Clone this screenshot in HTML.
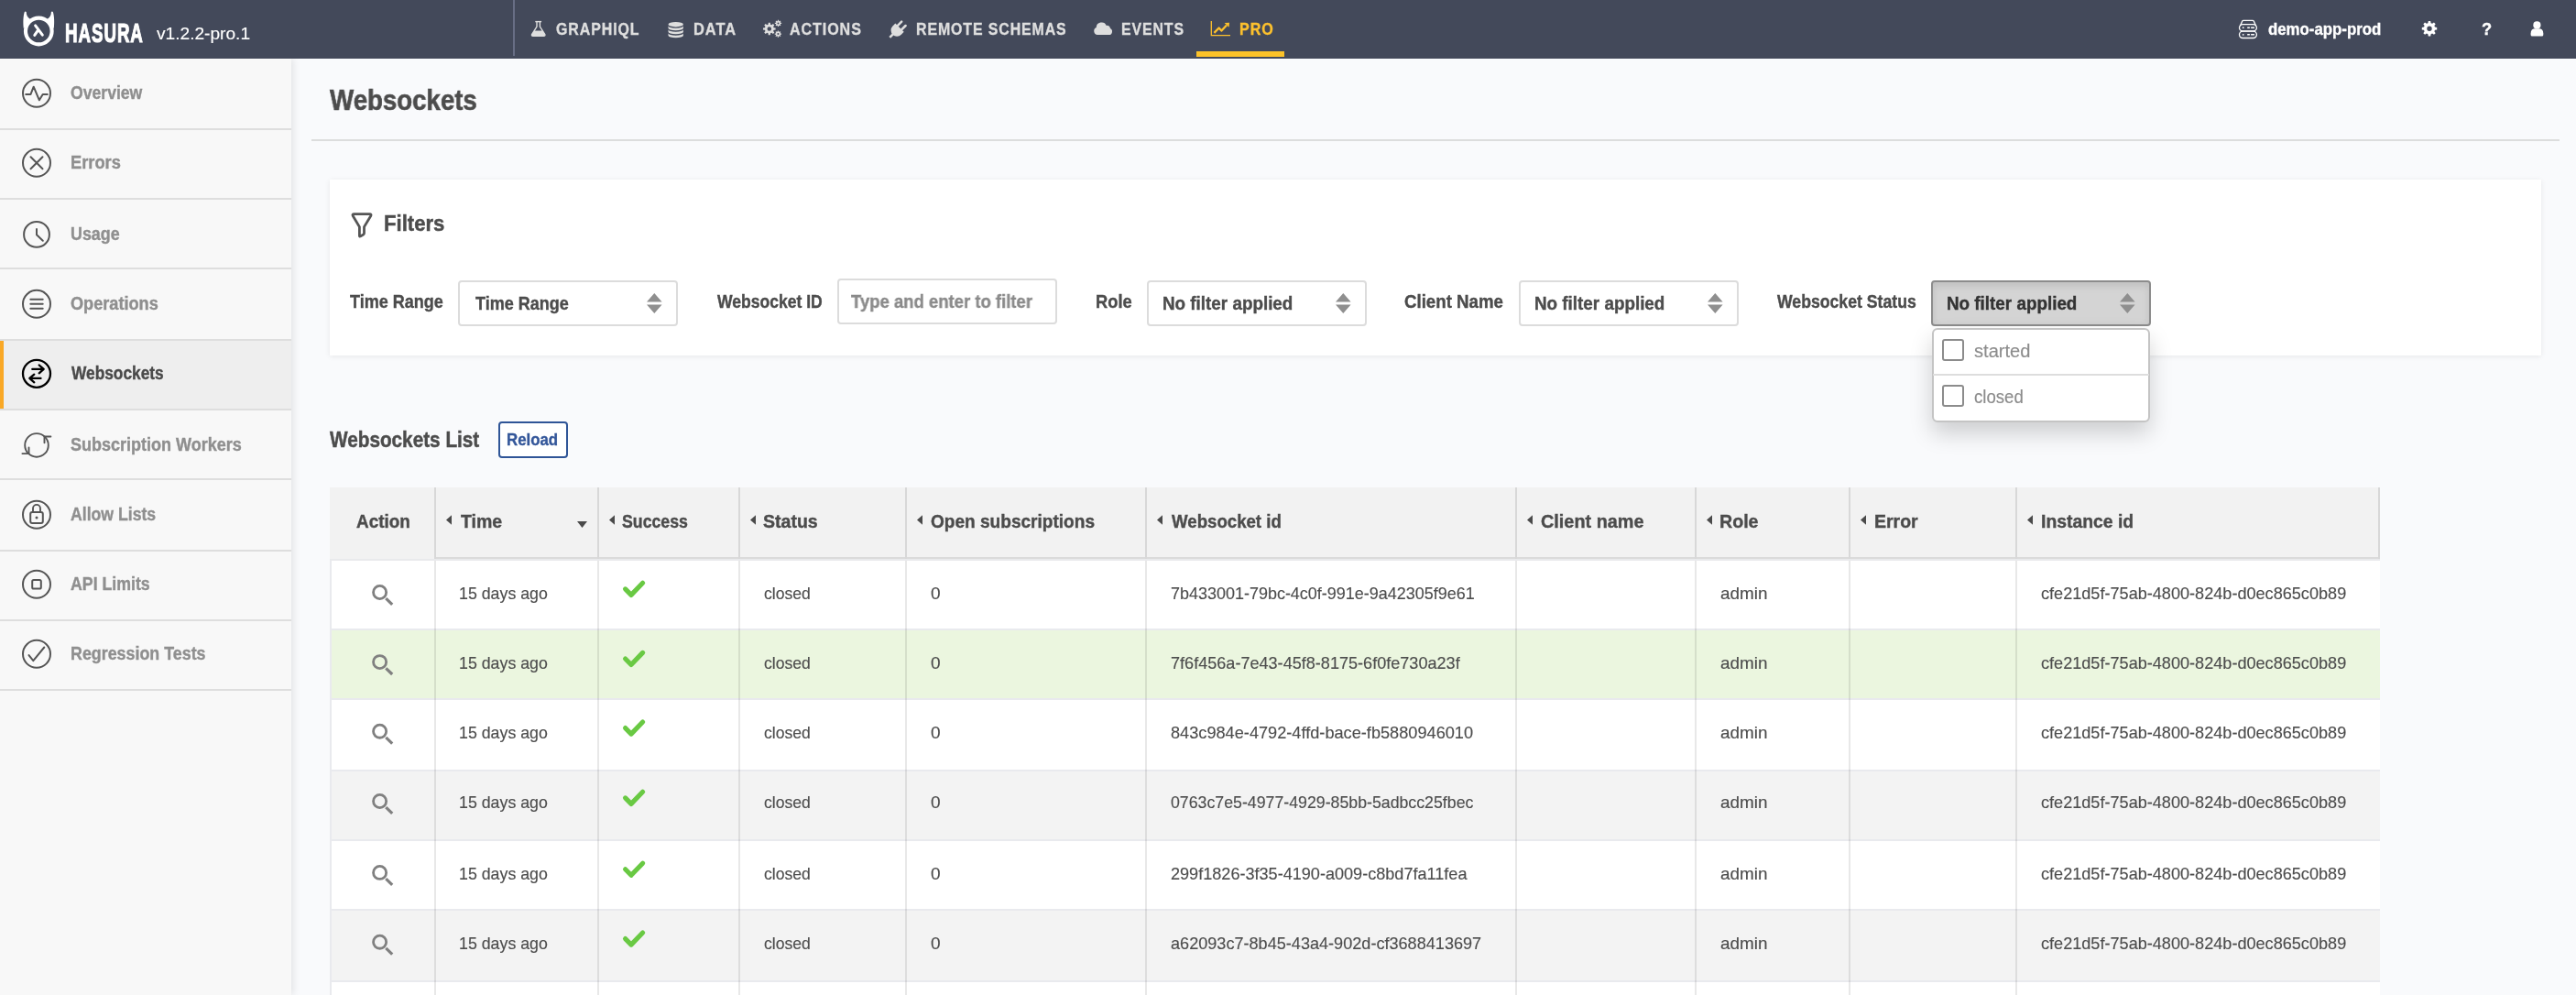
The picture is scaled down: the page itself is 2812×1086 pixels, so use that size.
<!DOCTYPE html>
<html lang="en"><head><meta charset="utf-8"><title>Websockets</title>
<style>
html,body{margin:0;padding:0}
body{width:2812px;height:1086px;overflow:hidden;position:relative;background:#f9fafc;font-family:"Liberation Sans", sans-serif}
.t{-webkit-text-stroke:.008em}
.t.b{-webkit-text-stroke:.02em}
.t.logo{-webkit-text-stroke:.04em}
.t{position:absolute;white-space:nowrap;line-height:1;transform-origin:0 0;display:block}
#root{position:absolute;left:0;top:0;width:2812px;height:1086px;will-change:transform}
#hdr{position:absolute;left:0;top:0;width:2812px;height:64px;background:#43495a}
#side{position:absolute;left:0;top:64px;width:318px;height:1022px;background:#f8f8f8;box-shadow:2px 0 8px rgba(0,0,0,.10)}
#card{position:absolute;left:360px;top:196px;width:2414px;height:192px;background:#fff;box-shadow:0 1px 6px rgba(0,0,0,.08)}
.sel,.inp{position:absolute;box-sizing:border-box;border:2px solid #dcdcdc;border-radius:4px;background:#fff}
.sel.act{background:#d4d4d4;border-color:#8c8c8c;box-shadow:inset 0 4px 8px rgba(0,0,0,.10)}
#dd{position:absolute;left:2109px;top:358px;width:238px;height:103px;box-sizing:border-box;background:#fff;border:2px solid #c4c4c4;border-radius:6px;box-shadow:0 12px 24px rgba(0,0,0,.175)}
</style></head>
<body>
<div id="root">
<div id="side"></div>
<header>
<div id="hdr"></div>
<div style="position:absolute;left:560px;top:0;width:2px;height:61px;background:#686e85"></div>
<svg style="position:absolute;left:0px;top:0px;overflow:visible" width="2812" height="64" viewBox="0 0 2812 64" ><circle cx="42.3" cy="34" r="14.35" fill="none" stroke="#fff" stroke-width="4.1"/><path d="M25.8 31C25.1 25 25.3 17 26.8 12.9Q27.7 12.1 28.7 13.1C28.8 16.6 29.9 19.3 32.9 20.7L29.5 27Z" fill="#fff"/><path d="M58.8 31C59.5 25 59.3 17 57.8 12.9Q56.9 12.1 55.9 13.1C55.8 16.6 54.7 19.3 51.7 20.7L55.1 27Z" fill="#fff"/><path d="M38.6 27.9L46.3 38.2M40.9 33.9L37.8 38.4" stroke="#fff" stroke-width="3" stroke-linecap="round" fill="none"/><rect x="584.3" y="22.9" width="6.8" height="1.4" fill="#dedede"/><path d="M586 24V29L580.6 37.6Q580 39.2 581.8 39.2H593.6Q595.4 39.2 594.8 37.6L589.4 29V24" fill="none" stroke="#dedede" stroke-width="1.4"/><path d="M583.1 33.6H592.3L594.8 37.6Q595.4 39.2 593.6 39.2H581.8Q580 39.2 580.6 37.6Z" fill="#dedede"/><ellipse cx="737.7" cy="26.7" rx="8.2" ry="2.7" fill="#dedede"/><path d="M729.5 28.3 A8.2 2.5 0 0 0 745.9 28.3 V30.8 A8.2 2.5 0 0 1 729.5 30.8 Z" fill="#dedede"/><path d="M729.5 32.3 A8.2 2.5 0 0 0 745.9 32.3 V34.8 A8.2 2.5 0 0 1 729.5 34.8 Z" fill="#dedede"/><path d="M729.5 36.3 A8.2 2.5 0 0 0 745.9 36.3 V38.8 A8.2 2.5 0 0 1 729.5 38.8 Z" fill="#dedede"/><path fill-rule="evenodd" fill="#dedede" d="M838.51 26.67L838.79 24.67L840.81 24.67L841.09 26.67L842.30 27.17L843.91 25.96L845.34 27.39L844.13 29.00L844.63 30.21L846.63 30.49L846.63 32.51L844.63 32.79L844.13 34.00L845.34 35.61L843.91 37.04L842.30 35.83L841.09 36.33L840.81 38.33L838.79 38.33L838.51 36.33L837.30 35.83L835.69 37.04L834.26 35.61L835.47 34.00L834.97 32.79L832.97 32.51L832.97 30.49L834.97 30.21L835.47 29.00L834.26 27.39L835.69 25.96L837.30 27.17ZM837.50 31.50a2.30 2.30 0 1 0 4.60 0a2.30 2.30 0 1 0 -4.60 0Z"/><path fill-rule="evenodd" fill="#dedede" d="M848.83 22.89L848.96 21.74L850.04 21.74L850.17 22.89L850.80 23.15L851.70 22.43L852.47 23.20L851.75 24.10L852.01 24.73L853.16 24.86L853.16 25.94L852.01 26.07L851.75 26.70L852.47 27.60L851.70 28.37L850.80 27.65L850.17 27.91L850.04 29.06L848.96 29.06L848.83 27.91L848.20 27.65L847.30 28.37L846.53 27.60L847.25 26.70L846.99 26.07L845.84 25.94L845.84 24.86L846.99 24.73L847.25 24.10L846.53 23.20L847.30 22.43L848.20 23.15ZM848.50 25.40a1.00 1.00 0 1 0 2.00 0a1.00 1.00 0 1 0 -2.00 0Z"/><path fill-rule="evenodd" fill="#dedede" d="M848.73 34.59L848.86 33.44L849.94 33.44L850.07 34.59L850.70 34.85L851.60 34.13L852.37 34.90L851.65 35.80L851.91 36.43L853.06 36.56L853.06 37.64L851.91 37.77L851.65 38.40L852.37 39.30L851.60 40.07L850.70 39.35L850.07 39.61L849.94 40.76L848.86 40.76L848.73 39.61L848.10 39.35L847.20 40.07L846.43 39.30L847.15 38.40L846.89 37.77L845.74 37.64L845.74 36.56L846.89 36.43L847.15 35.80L846.43 34.90L847.20 34.13L848.10 34.85ZM848.40 37.10a1.00 1.00 0 1 0 2.00 0a1.00 1.00 0 1 0 -2.00 0Z"/><g transform="translate(978.8 33.4) rotate(45)" fill="#dedede"><rect x="-4.4" y="-12" width="2.6" height="8.5" rx="1.3"/><rect x="1.8" y="-12" width="2.6" height="8.5" rx="1.3"/><path d="M-6.6 -4.6H6.6V-0.5A6.6 6.6 0 0 1 -6.6 -0.5Z"/><rect x="-1.3" y="5" width="2.6" height="5.6"/></g><path d="M1198 38.1A4.2 4.2 0 0 1 1196.7 30.1A5.8 5.8 0 0 1 1207.8 27.9A3.4 3.4 0 0 1 1212 31.1A3.7 3.7 0 0 1 1210.5 38.1Z" fill="#dedede"/><path d="M1322.3 22.9V38.6H1343" fill="none" stroke="#fdc12d" stroke-width="1.3"/><path d="M1325.4 35.9L1330.6 30.5L1333.4 33.6L1339 27.4" fill="none" stroke="#fdc12d" stroke-width="2.3" stroke-linejoin="round"/><path d="M1342 24.8L1336.6 25.1L1341.6 29.8Z" fill="#fdc12d"/><g fill="none" stroke="#fff" stroke-width="1.3"><rect x="2444.5" y="26.6" width="18.9" height="7.3" rx="3.65"/><rect x="2444.5" y="34.1" width="18.9" height="7.4" rx="3.7"/><path d="M2445.3 28.6L2447.6 23.3Q2448 22.4 2449 22.4H2458.9Q2459.9 22.4 2460.4 23.3L2462.7 28.6"/><path d="M2453.2 30.2H2455.9M2457.1 30.2H2460.9M2453.2 37.8H2455.9M2457.1 37.8H2460.9" stroke-width="1.5"/></g><circle cx="2448.7" cy="30.2" r="0.9" fill="#fff"/><circle cx="2448.7" cy="37.8" r="0.9" fill="#fff"/><path fill-rule="evenodd" fill="#fff" d="M2650.40 25.21L2650.78 22.99L2653.22 22.99L2653.60 25.21L2655.10 25.83L2656.94 24.53L2658.67 26.26L2657.37 28.10L2657.99 29.60L2660.21 29.98L2660.21 32.42L2657.99 32.80L2657.37 34.30L2658.67 36.14L2656.94 37.87L2655.10 36.57L2653.60 37.19L2653.22 39.41L2650.78 39.41L2650.40 37.19L2648.90 36.57L2647.06 37.87L2645.33 36.14L2646.63 34.30L2646.01 32.80L2643.79 32.42L2643.79 29.98L2646.01 29.60L2646.63 28.10L2645.33 26.26L2647.06 24.53L2648.90 25.83ZM2649.30 31.20a2.70 2.70 0 1 0 5.40 0a2.70 2.70 0 1 0 -5.40 0Z"/><circle cx="2769.4" cy="27.4" r="4.1" fill="#fff"/><path d="M2762.6 38V36.5Q2762.6 31.2 2767.5 31.2H2771.4Q2776.3 31.2 2776.3 36.5V38Q2776.3 39.5 2774.8 39.5H2764.1Q2762.6 39.5 2762.6 38Z" fill="#fff"/></svg>
<span class="t b logo" id="t0" style="left:71.37px;top:21.00px;font-size:29.30px;font-weight:700;color:#fff;letter-spacing:1.50px;transform:scaleX(0.6391);">HASURA</span>
<span class="t" id="t1" style="left:170.68px;top:27.00px;font-size:19.00px;font-weight:400;color:#fff;transform:scaleX(1.0064);">v1.2.2-pro.1</span>
<span class="t b" id="t2" style="left:607.19px;top:24.00px;font-size:17.50px;font-weight:700;color:#dedede;letter-spacing:1.00px;transform:scaleX(0.9112);">GRAPHIQL</span>
<span class="t b" id="t3" style="left:756.94px;top:24.00px;font-size:17.50px;font-weight:700;color:#dedede;letter-spacing:1.00px;transform:scaleX(0.9388);">DATA</span>
<span class="t b" id="t4" style="left:862.43px;top:24.00px;font-size:17.50px;font-weight:700;color:#dedede;letter-spacing:1.00px;transform:scaleX(0.9189);">ACTIONS</span>
<span class="t b" id="t5" style="left:999.95px;top:24.00px;font-size:17.50px;font-weight:700;color:#dedede;letter-spacing:1.00px;transform:scaleX(0.9082);">REMOTE SCHEMAS</span>
<span class="t b" id="t6" style="left:1224.46px;top:24.00px;font-size:17.50px;font-weight:700;color:#dedede;letter-spacing:1.00px;transform:scaleX(0.9064);">EVENTS</span>
<span class="t b" id="t7" style="left:1352.96px;top:24.00px;font-size:17.50px;font-weight:700;color:#fdc12d;letter-spacing:1.00px;transform:scaleX(0.9202);">PRO</span>
<div style="position:absolute;left:1306px;top:56px;width:96px;height:6px;background:#fcc229"></div>
<span class="t b" id="t8" style="left:2476.18px;top:22.00px;font-size:19.00px;font-weight:700;color:#fff;transform:scaleX(0.8844);">demo-app-prod</span>
<span class="t b" id="t9" style="left:2708.79px;top:23.00px;font-size:18.00px;font-weight:700;color:#fff;transform:scaleX(1.0155);">?</span>
</header>
<aside>
<div style="position:absolute;left:0;top:140px;width:318px;height:2px;background:#dedede"></div>
<span class="t b" id="t10" style="left:77.08px;top:92.00px;font-size:19.50px;font-weight:700;color:#8f8f8f;transform:scaleX(0.9030);">Overview</span>
<div style="position:absolute;left:0;top:216px;width:318px;height:2px;background:#dedede"></div>
<span class="t b" id="t11" style="left:76.82px;top:168.00px;font-size:19.50px;font-weight:700;color:#8f8f8f;transform:scaleX(0.9361);">Errors</span>
<div style="position:absolute;left:0;top:292px;width:318px;height:2px;background:#dedede"></div>
<span class="t b" id="t12" style="left:76.94px;top:246.00px;font-size:19.50px;font-weight:700;color:#8f8f8f;transform:scaleX(0.9173);">Usage</span>
<div style="position:absolute;left:0;top:370px;width:318px;height:2px;background:#dedede"></div>
<span class="t b" id="t13" style="left:77.06px;top:322.00px;font-size:19.50px;font-weight:700;color:#8f8f8f;transform:scaleX(0.9305);">Operations</span>
<div style="position:absolute;left:0;top:372px;width:318px;height:74px;background:#eee;border-left:4px solid #f9a826;box-sizing:border-box"></div>
<div style="position:absolute;left:0;top:446px;width:318px;height:2px;background:#dedede"></div>
<span class="t b" id="t14" style="left:77.88px;top:398.00px;font-size:19.50px;font-weight:700;color:#4a4a4a;transform:scaleX(0.8874);">Websockets</span>
<div style="position:absolute;left:0;top:522px;width:318px;height:2px;background:#dedede"></div>
<span class="t b" id="t15" style="left:77.32px;top:476.00px;font-size:19.50px;font-weight:700;color:#8f8f8f;transform:scaleX(0.9239);">Subscription Workers</span>
<div style="position:absolute;left:0;top:600px;width:318px;height:2px;background:#dedede"></div>
<span class="t b" id="t16" style="left:77.39px;top:552.00px;font-size:19.50px;font-weight:700;color:#8f8f8f;transform:scaleX(0.9049);">Allow Lists</span>
<div style="position:absolute;left:0;top:676px;width:318px;height:2px;background:#dedede"></div>
<span class="t b" id="t17" style="left:77.37px;top:628.00px;font-size:19.50px;font-weight:700;color:#8f8f8f;transform:scaleX(0.9094);">API Limits</span>
<div style="position:absolute;left:0;top:752px;width:318px;height:2px;background:#dedede"></div>
<span class="t b" id="t18" style="left:76.83px;top:704.00px;font-size:19.50px;font-weight:700;color:#8f8f8f;transform:scaleX(0.9155);">Regression Tests</span>
<svg style="position:absolute;left:0px;top:64px;overflow:visible" width="318" height="720" viewBox="0 64 318 720" ><circle cx="40" cy="101.8" r="15" fill="none" stroke="#555" stroke-width="2"/><path d="M28.20 102.90L33.50 102.90L36.70 94.70L42.90 109.30L46.70 102.90L51.80 102.90" fill="none" stroke="#555" stroke-width="2" stroke-linecap="round" stroke-linejoin="round" /><circle cx="40" cy="177.8" r="15" fill="none" stroke="#555" stroke-width="2"/><path d="M33.50 171.30L46.50 184.30M46.50 171.30L33.50 184.30" fill="none" stroke="#555" stroke-width="2" stroke-linecap="round" stroke-linejoin="round" /><circle cx="40" cy="255.9" r="13.9" fill="none" stroke="#555" stroke-width="2"/><path d="M40.00 250.10L40.00 256.30L46.80 262.70" fill="none" stroke="#555" stroke-width="2" stroke-linecap="round" stroke-linejoin="round" /><circle cx="40" cy="331.8" r="15" fill="none" stroke="#555" stroke-width="2"/><path d="M33.30 326.80L46.70 326.80M33.30 331.80L46.70 331.80M33.30 336.80L46.70 336.80" fill="none" stroke="#555" stroke-width="2" stroke-linecap="round" stroke-linejoin="round" /><circle cx="40" cy="407.8" r="15" fill="none" stroke="#000" stroke-width="2.3"/><path d="M35.30 402.90L47.70 402.90M42.70 398.50L47.70 402.90L42.70 407.30M44.50 412.90L32.30 412.90M37.30 408.70L32.30 412.90L37.30 417.30" fill="none" stroke="#000" stroke-width="2.3" stroke-linecap="round" stroke-linejoin="round" /><circle cx="40" cy="485.9" r="12.8" fill="none" stroke="#555" stroke-width="1.9"/><path d="M55.40 476.50L48.50 476.50L48.50 483.30M24.40 495.10L31.50 495.10L31.50 488.50" fill="none" stroke="#555" stroke-width="1.9" stroke-linecap="round" stroke-linejoin="round" /><circle cx="40" cy="561.8" r="15" fill="none" stroke="#555" stroke-width="2"/><rect x="33.2" y="559" width="13.6" height="12.1" rx="2" fill="none" stroke="#555" stroke-width="2"/><path d="M36 559 V554.9 A4 4 0 0 1 44 554.9 V559" fill="none" stroke="#555" stroke-width="1.9" stroke-linecap="round" stroke-linejoin="round" /><circle cx="40" cy="564.9" r="1.5" fill="#555"/><circle cx="40" cy="637.8" r="15" fill="none" stroke="#555" stroke-width="2"/><rect x="35.2" y="633" width="9.6" height="9.6" rx="1.6" fill="none" stroke="#555" stroke-width="2"/><circle cx="40" cy="713.8" r="15" fill="none" stroke="#555" stroke-width="2"/><path d="M31.50 715.10L36.30 721.10L48.30 706.50" fill="none" stroke="#555" stroke-width="2" stroke-linecap="round" stroke-linejoin="round" /></svg>
</aside>
<main>
<span class="t b" id="t19" style="left:359.79px;top:93.00px;font-size:32.00px;font-weight:700;color:#4c4c4c;transform:scaleX(0.8637);">Websockets</span>
<div style="position:absolute;left:340px;top:152px;width:2454px;height:2px;background:#dcdddd"></div>
<div id="card"></div>
<span class="t b" id="t20" style="left:419.39px;top:233.00px;font-size:23.20px;font-weight:700;color:#4c4c4c;transform:scaleX(0.9531);">Filters</span>
<svg style="position:absolute;left:380px;top:230px;overflow:visible" width="30" height="32" viewBox="380 230 30 32" ><path d="M386.6 233.6H403.4Q405.9 233.6 404.7 235.7L397.5 247.6V254.4Q397.5 255.4 396.6 256L393.6 257.9Q392.4 258.6 392.4 257.2V247.6L385.3 235.7Q384.1 233.6 386.6 233.6Z" fill="none" stroke="#555" stroke-width="2.8" stroke-linejoin="round"/></svg>
<span class="t b" id="t21" style="left:382.31px;top:320.00px;font-size:19.50px;font-weight:700;color:#4c4c4c;transform:scaleX(0.9244);">Time Range</span>
<span class="t b" id="t22" style="left:782.88px;top:320.00px;font-size:19.50px;font-weight:700;color:#4c4c4c;transform:scaleX(0.9003);">Websocket ID</span>
<span class="t b" id="t23" style="left:1195.83px;top:320.00px;font-size:19.50px;font-weight:700;color:#4c4c4c;transform:scaleX(0.9382);">Role</span>
<span class="t b" id="t24" style="left:1533.25px;top:320.00px;font-size:19.50px;font-weight:700;color:#4c4c4c;transform:scaleX(0.9574);">Client Name</span>
<span class="t b" id="t25" style="left:1939.88px;top:320.00px;font-size:19.50px;font-weight:700;color:#4c4c4c;transform:scaleX(0.9053);">Websocket Status</span>
<div class="sel" style="left:500px;top:306px;width:240px;height:50px;"></div>
<svg style="position:absolute;left:706px;top:320px" width="16.6" height="22" viewBox="0 0 16.6 22"><path d="M8.3 0L16.6 9.6H0zM0 12.4H16.6L8.3 22z" fill="#8f8f8f"/></svg>
<div class="sel" style="left:1252px;top:306px;width:240px;height:50px;"></div>
<svg style="position:absolute;left:1458px;top:320px" width="16.6" height="22" viewBox="0 0 16.6 22"><path d="M8.3 0L16.6 9.6H0zM0 12.4H16.6L8.3 22z" fill="#8f8f8f"/></svg>
<div class="sel" style="left:1658px;top:306px;width:240px;height:50px;"></div>
<svg style="position:absolute;left:1864px;top:320px" width="16.6" height="22" viewBox="0 0 16.6 22"><path d="M8.3 0L16.6 9.6H0zM0 12.4H16.6L8.3 22z" fill="#8f8f8f"/></svg>
<div class="sel act" style="left:2108px;top:306px;width:240px;height:50px;"></div>
<svg style="position:absolute;left:2314px;top:320px" width="16.6" height="22" viewBox="0 0 16.6 22"><path d="M8.3 0L16.6 9.6H0zM0 12.4H16.6L8.3 22z" fill="#8f8f8f"/></svg>
<span class="t b" id="t26" style="left:519.06px;top:322.00px;font-size:19.50px;font-weight:700;color:#4c4c4c;transform:scaleX(0.9244);">Time Range</span>
<span class="t b" id="t27" style="left:1268.78px;top:322.00px;font-size:19.50px;font-weight:700;color:#4c4c4c;transform:scaleX(0.9661);">No filter applied</span>
<span class="t b" id="t28" style="left:1675.03px;top:322.00px;font-size:19.50px;font-weight:700;color:#4c4c4c;transform:scaleX(0.9661);">No filter applied</span>
<span class="t b" id="t29" style="left:2124.77px;top:322.00px;font-size:19.50px;font-weight:700;color:#333;transform:scaleX(0.9662);">No filter applied</span>
<div class="inp" style="left:914px;top:304px;width:240px;height:50px"></div>
<span class="t b" id="t30" style="left:928.81px;top:320.00px;font-size:19.50px;font-weight:700;color:#8a8a8a;transform:scaleX(0.9483);">Type and enter to filter</span>
<span class="t b" id="t31" style="left:360.09px;top:469.00px;font-size:23.60px;font-weight:700;color:#4c4c4c;transform:scaleX(0.8788);">Websockets List</span>
<div style="position:absolute;left:544px;top:460px;width:76px;height:40px;box-sizing:border-box;border:2px solid #2f5597;border-radius:4px;background:#fff"></div>
<span class="t b" id="t32" style="left:553.40px;top:471.00px;font-size:18.00px;font-weight:700;color:#34579a;transform:scaleX(0.9355);">Reload</span>
<div style="position:absolute;left:360px;top:532px;width:2238px;height:78px;background:#f2f2f2"></div>
<div style="position:absolute;left:474px;top:608px;width:2124px;height:2px;background:#dbdbdb"></div>
<div style="position:absolute;left:360px;top:610px;width:2238px;height:2px;background:#e9eaec"></div>
<div style="position:absolute;left:2596px;top:532px;width:2px;height:78px;background:#d8d8d8"></div>
<span class="t b" id="t33" style="left:388.84px;top:558.00px;font-size:21.00px;font-weight:700;color:#4c4c4c;transform:scaleX(0.8988);">Action</span>
<span class="t b" id="t34" style="left:502.81px;top:558.00px;font-size:21.00px;font-weight:700;color:#4c4c4c;transform:scaleX(0.9283);">Time</span>
<span class="t b" id="t35" style="left:679.29px;top:558.00px;font-size:21.00px;font-weight:700;color:#4c4c4c;transform:scaleX(0.8438);">Success</span>
<span class="t b" id="t36" style="left:833.24px;top:558.00px;font-size:21.00px;font-weight:700;color:#4c4c4c;transform:scaleX(0.9300);">Status</span>
<span class="t b" id="t37" style="left:1015.95px;top:558.00px;font-size:21.00px;font-weight:700;color:#4c4c4c;transform:scaleX(0.9078);">Open subscriptions</span>
<span class="t b" id="t38" style="left:1279.12px;top:558.00px;font-size:21.00px;font-weight:700;color:#4c4c4c;transform:scaleX(0.8877);">Websocket id</span>
<span class="t b" id="t39" style="left:1682.37px;top:558.00px;font-size:21.00px;font-weight:700;color:#4c4c4c;transform:scaleX(0.9448);">Client name</span>
<span class="t b" id="t40" style="left:1876.73px;top:558.00px;font-size:21.00px;font-weight:700;color:#4c4c4c;transform:scaleX(0.9343);">Role</span>
<span class="t b" id="t41" style="left:2046.23px;top:558.00px;font-size:21.00px;font-weight:700;color:#4c4c4c;transform:scaleX(0.9273);">Error</span>
<span class="t b" id="t42" style="left:2227.99px;top:558.00px;font-size:21.00px;font-weight:700;color:#4c4c4c;transform:scaleX(0.9215);">Instance id</span>
<svg style="position:absolute;left:487px;top:562px" width="6.2" height="11" viewBox="0 0 6.2 11"><path d="M6.2 0V11L0 5.5z" fill="#4a4a4a"/></svg>
<svg style="position:absolute;left:665px;top:562px" width="6.2" height="11" viewBox="0 0 6.2 11"><path d="M6.2 0V11L0 5.5z" fill="#4a4a4a"/></svg>
<svg style="position:absolute;left:819px;top:562px" width="6.2" height="11" viewBox="0 0 6.2 11"><path d="M6.2 0V11L0 5.5z" fill="#4a4a4a"/></svg>
<svg style="position:absolute;left:1001px;top:562px" width="6.2" height="11" viewBox="0 0 6.2 11"><path d="M6.2 0V11L0 5.5z" fill="#4a4a4a"/></svg>
<svg style="position:absolute;left:1263px;top:562px" width="6.2" height="11" viewBox="0 0 6.2 11"><path d="M6.2 0V11L0 5.5z" fill="#4a4a4a"/></svg>
<svg style="position:absolute;left:1667px;top:562px" width="6.2" height="11" viewBox="0 0 6.2 11"><path d="M6.2 0V11L0 5.5z" fill="#4a4a4a"/></svg>
<svg style="position:absolute;left:1863px;top:562px" width="6.2" height="11" viewBox="0 0 6.2 11"><path d="M6.2 0V11L0 5.5z" fill="#4a4a4a"/></svg>
<svg style="position:absolute;left:2031px;top:562px" width="6.2" height="11" viewBox="0 0 6.2 11"><path d="M6.2 0V11L0 5.5z" fill="#4a4a4a"/></svg>
<svg style="position:absolute;left:2213px;top:562px" width="6.2" height="11" viewBox="0 0 6.2 11"><path d="M6.2 0V11L0 5.5z" fill="#4a4a4a"/></svg>
<svg style="position:absolute;left:630px;top:569px" width="11" height="7" viewBox="0 0 11 7"><path d="M0 0H11L5.5 7z" fill="#4a4a4a"/></svg>
<div style="position:absolute;left:360px;top:612px;width:2238px;height:76px;background:#fff;border-bottom:2px solid #e9eaee;border-left:2px solid #e9eaee;box-sizing:border-box"></div>
<span class="t" id="t43" style="left:500.94px;top:638.00px;font-size:19.00px;font-weight:400;color:#4d4d4d;transform:scaleX(0.9357);">15 days ago</span>
<span class="t" id="t44" style="left:833.66px;top:638.00px;font-size:19.00px;font-weight:400;color:#4d4d4d;transform:scaleX(0.9267);">closed</span>
<span class="t" id="t45" style="left:1016.04px;top:638.00px;font-size:19.00px;font-weight:400;color:#4d4d4d;transform:scaleX(1.0050);">0</span>
<span class="t" id="t46" style="left:1277.71px;top:638.00px;font-size:19.00px;font-weight:400;color:#4d4d4d;transform:scaleX(0.9456);">7b433001-79bc-4c0f-991e-9a42305f9e61</span>
<span class="t" id="t47" style="left:1877.59px;top:638.00px;font-size:19.00px;font-weight:400;color:#4d4d4d;transform:scaleX(0.9945);">admin</span>
<span class="t" id="t48" style="left:2227.86px;top:638.00px;font-size:19.00px;font-weight:400;color:#4d4d4d;transform:scaleX(0.9529);">cfe21d5f-75ab-4800-824b-d0ec865c0b89</span>
<div style="position:absolute;left:360px;top:688px;width:2238px;height:76px;background:#ebf6df;border-bottom:2px solid #e9eaee;border-left:2px solid #e9eaee;box-sizing:border-box"></div>
<span class="t" id="t49" style="left:500.94px;top:714.00px;font-size:19.00px;font-weight:400;color:#4d4d4d;transform:scaleX(0.9357);">15 days ago</span>
<span class="t" id="t50" style="left:833.67px;top:714.00px;font-size:19.00px;font-weight:400;color:#4d4d4d;transform:scaleX(0.9268);">closed</span>
<span class="t" id="t51" style="left:1016.04px;top:714.00px;font-size:19.00px;font-weight:400;color:#4d4d4d;transform:scaleX(1.0052);">0</span>
<span class="t" id="t52" style="left:1277.69px;top:714.00px;font-size:19.00px;font-weight:400;color:#4d4d4d;transform:scaleX(0.9516);">7f6f456a-7e43-45f8-8175-6f0fe730a23f</span>
<span class="t" id="t53" style="left:1877.59px;top:714.00px;font-size:19.00px;font-weight:400;color:#4d4d4d;transform:scaleX(0.9945);">admin</span>
<span class="t" id="t54" style="left:2227.87px;top:714.00px;font-size:19.00px;font-weight:400;color:#4d4d4d;transform:scaleX(0.9529);">cfe21d5f-75ab-4800-824b-d0ec865c0b89</span>
<div style="position:absolute;left:360px;top:764px;width:2238px;height:78px;background:#fff;border-bottom:2px solid #e9eaee;border-left:2px solid #e9eaee;box-sizing:border-box"></div>
<span class="t" id="t55" style="left:500.94px;top:790.00px;font-size:19.00px;font-weight:400;color:#4d4d4d;transform:scaleX(0.9357);">15 days ago</span>
<span class="t" id="t56" style="left:833.66px;top:790.00px;font-size:19.00px;font-weight:400;color:#4d4d4d;transform:scaleX(0.9267);">closed</span>
<span class="t" id="t57" style="left:1016.04px;top:790.00px;font-size:19.00px;font-weight:400;color:#4d4d4d;transform:scaleX(1.0050);">0</span>
<span class="t" id="t58" style="left:1277.81px;top:790.00px;font-size:19.00px;font-weight:400;color:#4d4d4d;transform:scaleX(0.9564);">843c984e-4792-4ffd-bace-fb5880946010</span>
<span class="t" id="t59" style="left:1877.59px;top:790.00px;font-size:19.00px;font-weight:400;color:#4d4d4d;transform:scaleX(0.9945);">admin</span>
<span class="t" id="t60" style="left:2227.86px;top:790.00px;font-size:19.00px;font-weight:400;color:#4d4d4d;transform:scaleX(0.9529);">cfe21d5f-75ab-4800-824b-d0ec865c0b89</span>
<div style="position:absolute;left:360px;top:842px;width:2238px;height:76px;background:#f3f3f3;border-bottom:2px solid #e9eaee;border-left:2px solid #e9eaee;box-sizing:border-box"></div>
<span class="t" id="t61" style="left:500.94px;top:866.00px;font-size:19.00px;font-weight:400;color:#4d4d4d;transform:scaleX(0.9357);">15 days ago</span>
<span class="t" id="t62" style="left:833.66px;top:866.00px;font-size:19.00px;font-weight:400;color:#4d4d4d;transform:scaleX(0.9267);">closed</span>
<span class="t" id="t63" style="left:1016.05px;top:866.00px;font-size:19.00px;font-weight:400;color:#4d4d4d;transform:scaleX(1.0053);">0</span>
<span class="t" id="t64" style="left:1278.05px;top:866.00px;font-size:19.00px;font-weight:400;color:#4d4d4d;transform:scaleX(0.9335);">0763c7e5-4977-4929-85bb-5adbcc25fbec</span>
<span class="t" id="t65" style="left:1877.60px;top:866.00px;font-size:19.00px;font-weight:400;color:#4d4d4d;transform:scaleX(0.9945);">admin</span>
<span class="t" id="t66" style="left:2227.87px;top:866.00px;font-size:19.00px;font-weight:400;color:#4d4d4d;transform:scaleX(0.9529);">cfe21d5f-75ab-4800-824b-d0ec865c0b89</span>
<div style="position:absolute;left:360px;top:918px;width:2238px;height:76px;background:#fff;border-bottom:2px solid #e9eaee;border-left:2px solid #e9eaee;box-sizing:border-box"></div>
<span class="t" id="t67" style="left:500.94px;top:944.00px;font-size:19.00px;font-weight:400;color:#4d4d4d;transform:scaleX(0.9357);">15 days ago</span>
<span class="t" id="t68" style="left:833.66px;top:944.00px;font-size:19.00px;font-weight:400;color:#4d4d4d;transform:scaleX(0.9267);">closed</span>
<span class="t" id="t69" style="left:1016.04px;top:944.00px;font-size:19.00px;font-weight:400;color:#4d4d4d;transform:scaleX(1.0050);">0</span>
<span class="t" id="t70" style="left:1277.73px;top:944.00px;font-size:19.00px;font-weight:400;color:#4d4d4d;transform:scaleX(0.9519);">299f1826-3f35-4190-a009-c8bd7fa11fea</span>
<span class="t" id="t71" style="left:1877.59px;top:944.00px;font-size:19.00px;font-weight:400;color:#4d4d4d;transform:scaleX(0.9945);">admin</span>
<span class="t" id="t72" style="left:2227.86px;top:944.00px;font-size:19.00px;font-weight:400;color:#4d4d4d;transform:scaleX(0.9529);">cfe21d5f-75ab-4800-824b-d0ec865c0b89</span>
<div style="position:absolute;left:360px;top:994px;width:2238px;height:78px;background:#f3f3f3;border-bottom:2px solid #e9eaee;border-left:2px solid #e9eaee;box-sizing:border-box"></div>
<span class="t" id="t73" style="left:500.94px;top:1020.00px;font-size:19.00px;font-weight:400;color:#4d4d4d;transform:scaleX(0.9357);">15 days ago</span>
<span class="t" id="t74" style="left:833.66px;top:1020.00px;font-size:19.00px;font-weight:400;color:#4d4d4d;transform:scaleX(0.9267);">closed</span>
<span class="t" id="t75" style="left:1016.05px;top:1020.00px;font-size:19.00px;font-weight:400;color:#4d4d4d;transform:scaleX(1.0053);">0</span>
<span class="t" id="t76" style="left:1277.88px;top:1020.00px;font-size:19.00px;font-weight:400;color:#4d4d4d;transform:scaleX(0.9526);">a62093c7-8b45-43a4-902d-cf3688413697</span>
<span class="t" id="t77" style="left:1877.60px;top:1020.00px;font-size:19.00px;font-weight:400;color:#4d4d4d;transform:scaleX(0.9945);">admin</span>
<span class="t" id="t78" style="left:2227.87px;top:1020.00px;font-size:19.00px;font-weight:400;color:#4d4d4d;transform:scaleX(0.9529);">cfe21d5f-75ab-4800-824b-d0ec865c0b89</span>
<div style="position:absolute;left:360px;top:1072px;width:2238px;height:76px;background:#fff;border-bottom:2px solid #e9eaee;border-left:2px solid #e9eaee;box-sizing:border-box"></div>
<svg style="position:absolute;left:360px;top:612px;overflow:visible" width="400" height="474" viewBox="360 612 400 474" ><circle cx="414.6" cy="646.5" r="7.05" fill="none" stroke="#808080" stroke-width="2.8"/><path d="M421.3 653.2L428.2 659.9" stroke="#808080" stroke-width="3.2" fill="none"/><path d="M682.6 642.9L689 649.4L701.6 636.3" fill="none" stroke="#69c943" stroke-width="5.2" stroke-linecap="round" stroke-linejoin="round"/><circle cx="414.6" cy="722.6" r="7.05" fill="none" stroke="#808080" stroke-width="2.8"/><path d="M421.3 729.3L428.2 736" stroke="#808080" stroke-width="3.2" fill="none"/><path d="M682.6 719L689 725.5L701.6 712.4" fill="none" stroke="#69c943" stroke-width="5.2" stroke-linecap="round" stroke-linejoin="round"/><circle cx="414.6" cy="798.2" r="7.05" fill="none" stroke="#808080" stroke-width="2.8"/><path d="M421.3 804.9L428.2 811.6" stroke="#808080" stroke-width="3.2" fill="none"/><path d="M682.6 794.6L689 801.1L701.6 788" fill="none" stroke="#69c943" stroke-width="5.2" stroke-linecap="round" stroke-linejoin="round"/><circle cx="414.6" cy="874.5" r="7.05" fill="none" stroke="#808080" stroke-width="2.8"/><path d="M421.3 881.2L428.2 887.9" stroke="#808080" stroke-width="3.2" fill="none"/><path d="M682.6 870.9L689 877.4L701.6 864.3" fill="none" stroke="#69c943" stroke-width="5.2" stroke-linecap="round" stroke-linejoin="round"/><circle cx="414.6" cy="952.4" r="7.05" fill="none" stroke="#808080" stroke-width="2.8"/><path d="M421.3 959.1L428.2 965.8" stroke="#808080" stroke-width="3.2" fill="none"/><path d="M682.6 948.8L689 955.3L701.6 942.2" fill="none" stroke="#69c943" stroke-width="5.2" stroke-linecap="round" stroke-linejoin="round"/><circle cx="414.6" cy="1028.2" r="7.05" fill="none" stroke="#808080" stroke-width="2.8"/><path d="M421.3 1034.9L428.2 1041.6" stroke="#808080" stroke-width="3.2" fill="none"/><path d="M682.6 1024.6L689 1031.1L701.6 1018" fill="none" stroke="#69c943" stroke-width="5.2" stroke-linecap="round" stroke-linejoin="round"/></svg>
<div style="position:absolute;left:474px;top:532px;width:2px;height:78px;background:#d8d8d8"></div>
<div style="position:absolute;left:474px;top:612px;width:2px;height:480px;background:rgba(0,0,0,.09)"></div>
<div style="position:absolute;left:652px;top:532px;width:2px;height:78px;background:#d8d8d8"></div>
<div style="position:absolute;left:652px;top:612px;width:2px;height:480px;background:rgba(0,0,0,.09)"></div>
<div style="position:absolute;left:806px;top:532px;width:2px;height:78px;background:#d8d8d8"></div>
<div style="position:absolute;left:806px;top:612px;width:2px;height:480px;background:rgba(0,0,0,.09)"></div>
<div style="position:absolute;left:988px;top:532px;width:2px;height:78px;background:#d8d8d8"></div>
<div style="position:absolute;left:988px;top:612px;width:2px;height:480px;background:rgba(0,0,0,.09)"></div>
<div style="position:absolute;left:1250px;top:532px;width:2px;height:78px;background:#d8d8d8"></div>
<div style="position:absolute;left:1250px;top:612px;width:2px;height:480px;background:rgba(0,0,0,.09)"></div>
<div style="position:absolute;left:1654px;top:532px;width:2px;height:78px;background:#d8d8d8"></div>
<div style="position:absolute;left:1654px;top:612px;width:2px;height:480px;background:rgba(0,0,0,.09)"></div>
<div style="position:absolute;left:1850px;top:532px;width:2px;height:78px;background:#d8d8d8"></div>
<div style="position:absolute;left:1850px;top:612px;width:2px;height:480px;background:rgba(0,0,0,.09)"></div>
<div style="position:absolute;left:2018px;top:532px;width:2px;height:78px;background:#d8d8d8"></div>
<div style="position:absolute;left:2018px;top:612px;width:2px;height:480px;background:rgba(0,0,0,.09)"></div>
<div style="position:absolute;left:2200px;top:532px;width:2px;height:78px;background:#d8d8d8"></div>
<div style="position:absolute;left:2200px;top:612px;width:2px;height:480px;background:rgba(0,0,0,.09)"></div>
<div id="dd"></div>
<div style="position:absolute;left:2110px;top:408px;width:236px;height:2px;background:#ddd"></div>
<div style="position:absolute;left:2120px;top:370px;width:24px;height:24px;box-sizing:border-box;border:2px solid #8c8c8c;border-radius:3px;background:#fff"></div>
<div style="position:absolute;left:2120px;top:420px;width:24px;height:24px;box-sizing:border-box;border:2px solid #8c8c8c;border-radius:3px;background:#fff"></div>
<span class="t" id="t79" style="left:2155.20px;top:373.00px;font-size:20.00px;font-weight:400;color:#8c8c8c;transform:scaleX(1.0050);">started</span>
<span class="t" id="t80" style="left:2155.18px;top:423.00px;font-size:20.00px;font-weight:400;color:#8c8c8c;transform:scaleX(0.9311);">closed</span>
</main>
</div>
</body></html>
